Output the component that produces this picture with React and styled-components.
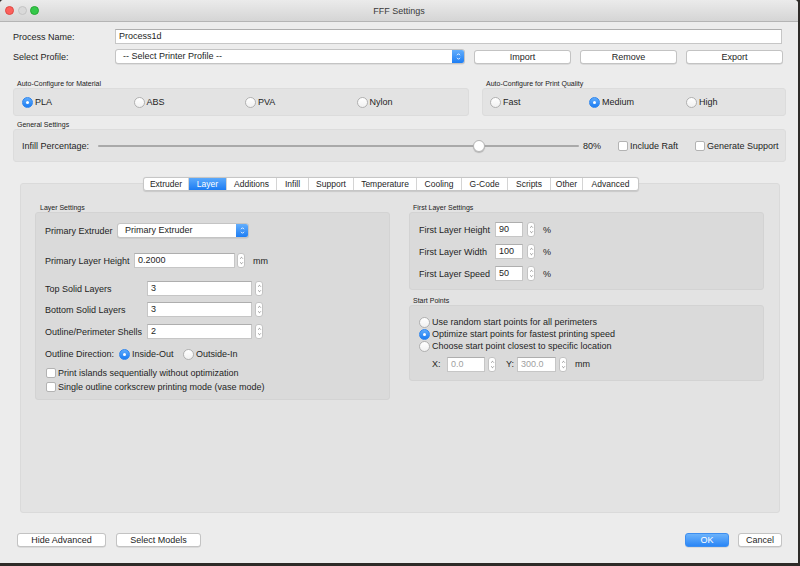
import React from 'react'
import styled, { createGlobalStyle } from 'styled-components'

const Global = createGlobalStyle`
  html, body {
    margin: 0;
    padding: 0;
    background: #2e2b28;
  }
  body {
    font-family: 'Liberation Sans', Arial, sans-serif;
    font-size: 9px;
    color: #1e1e1e;
  }
`

// Window frame
const Window = styled.div`
  width: 798px;
  height: 563px;
  background: #ececec;
  border-radius: 4px 4px 0 0;
  overflow: hidden;
  display: flex;
  flex-direction: column;
`

const TitleBar = styled.div`
  height: 21px;
  flex: none;
  display: flex;
  align-items: center;
  position: relative;
  background: linear-gradient(#ebebeb, #d5d5d5);
  border-bottom: 1px solid #b4b4b4;
`

const Lights = styled.div`
  display: flex;
  gap: 3.5px;
  padding-left: 5px;
`

const Light = styled.span`
  width: 9px;
  height: 9px;
  border-radius: 50%;
  background: ${p => p.$c};
  border: 0.5px solid ${p => p.$b};
  box-sizing: border-box;
`

const Title = styled.div`
  position: absolute;
  left: 0;
  right: 0;
  text-align: center;
  font-size: 9px;
  color: #3a3a3a;
`

const Body = styled.div`
  flex: 1;
  display: flex;
  flex-direction: column;
  padding: 7px 12px 0 13px;
`

// Top form rows
const FormRow = styled.div`
  display: flex;
  align-items: center;
  height: 15px;
  margin-top: ${p => p.$mt || 0}px;
  padding-right: 4px;
`

const FieldLabel = styled.span`
  width: ${p => p.$w || 102}px;
  flex: none;
  white-space: nowrap;
  margin-left: ${p => p.$ml || 0}px;
`

const TextInput = styled.div`
  box-sizing: border-box;
  height: 15px;
  width: ${p => (p.$w ? `${p.$w}px` : 'auto')};
  flex: ${p => (p.$w ? 'none' : 1)};
  background: #fff;
  border: 1px solid #c6c6c6;
  border-top-color: #aeaeae;
  padding: 0 3px;
  line-height: 13px;
  color: ${p => (p.$disabled ? '#a0a0a0' : '#1e1e1e')};
`

const SelectBox = styled.div`
  box-sizing: border-box;
  width: ${p => p.$w}px;
  height: 15px;
  flex: none;
  display: flex;
  align-items: stretch;
  background: #fff;
  border: 1px solid #c4c4c4;
  border-radius: 3px;
  box-shadow: 0 0.5px 0.5px rgba(0, 0, 0, 0.12);
  overflow: hidden;
`

const SelectText = styled.span`
  flex: 1;
  padding-left: 7px;
  line-height: 13px;
`

const SelectArrow = styled.span`
  width: 12px;
  display: flex;
  align-items: center;
  justify-content: center;
  background: linear-gradient(#63aefc, #1e7ef4);
`

const Button = styled.div`
  box-sizing: border-box;
  width: ${p => p.$w}px;
  height: 14px;
  flex: none;
  display: flex;
  align-items: center;
  justify-content: center;
  border-radius: 3px;
  border: 1px solid ${p => (p.$primary ? '#3d8ef0' : '#c3c3c3')};
  background: ${p => (p.$primary ? 'linear-gradient(#6cb3fb, #2a86f6)' : '#fff')};
  color: ${p => (p.$primary ? '#fff' : '#1e1e1e')};
  box-shadow: 0 0.5px 0.5px rgba(0, 0, 0, 0.15);
  margin-left: ${p => p.$ml || 0}px;
`

// Group boxes
const GroupRow = styled.div`
  display: flex;
  gap: 13px;
  margin-top: ${p => p.$mt || 0}px;
`

const GroupWrap = styled.div`
  width: ${p => (p.$w ? `${p.$w}px` : 'auto')};
  flex: ${p => (p.$grow ? 1 : 'none')};
  margin-top: ${p => p.$mt || 0}px;
`

const GroupLabel = styled.div`
  font-size: 7px;
  height: 8px;
  line-height: 8px;
  padding-left: ${p => p.$pl || 4}px;
  color: #222;
  white-space: nowrap;
`

const GroupBox = styled.div`
  box-sizing: border-box;
  height: ${p => p.$h}px;
  background: ${p => p.$bg || '#e3e3e3'};
  border: 1px solid ${p => p.$bd || '#dcdcdc'};
  border-radius: 3px;
  padding: ${p => p.$pad || '0'};
  display: flex;
  flex-direction: ${p => (p.$col ? 'column' : 'row')};
  align-items: ${p => (p.$col ? 'stretch' : 'center')};
`

const RadioItem = styled.label`
  display: flex;
  align-items: center;
  width: ${p => (p.$w ? `${p.$w}px` : 'auto')};
  flex: none;
  gap: 2px;
  height: ${p => p.$h || 12}px;
  white-space: nowrap;
`

const RadioDot = styled.span`
  box-sizing: border-box;
  width: 11px;
  height: 11px;
  border-radius: 50%;
  flex: none;
  display: flex;
  align-items: center;
  justify-content: center;
  background: ${p => (p.$on ? 'linear-gradient(#5fabfb, #1b7cf3)' : 'linear-gradient(#fff, #f1f1f1)')};
  border: 1px solid ${p => (p.$on ? '#2f86ee' : '#b1b1b1')};
  &::after {
    content: '';
    display: ${p => (p.$on ? 'block' : 'none')};
    width: 3px;
    height: 3px;
    border-radius: 50%;
    background: #fff;
  }
`

const CheckBox = styled.span`
  box-sizing: border-box;
  width: 10px;
  height: 10px;
  flex: none;
  background: #fff;
  border: 1px solid #b3b3b3;
  border-radius: 2px;
`

const CheckItem = styled.label`
  display: flex;
  align-items: center;
  gap: 2px;
  height: ${p => p.$h || 12}px;
  margin-left: ${p => p.$ml || 0}px;
  margin-top: ${p => p.$mt || 0}px;
  white-space: nowrap;
`

// Slider
const Track = styled.div`
  position: relative;
  width: 481px;
  height: 2px;
  background: #a9a9a9;
  border-radius: 1px;
`

const Thumb = styled.span`
  position: absolute;
  top: -5px;
  width: 12px;
  height: 12px;
  margin-left: -6px;
  border-radius: 50%;
  background: #fff;
  border: 0.5px solid #b5b5b5;
  box-shadow: 0 1px 1px rgba(0, 0, 0, 0.2);
  box-sizing: border-box;
`

const Percent = styled.span`
  margin-left: 4px;
  width: 35px;
  flex: none;
`

// Tabs panel
const TabPane = styled.div`
  margin: 21px 6px 0 7px;
  height: 330px;
  flex: none;
  box-sizing: border-box;
  background: #e3e3e3;
  border: 1px solid #dadada;
  border-radius: 3px;
  display: flex;
  flex-direction: column;
`

const TabBar = styled.div`
  display: flex;
  align-self: flex-start;
  margin: -7px 0 0 122px;
  height: 14px;
  box-sizing: border-box;
  background: #fff;
  border: 1px solid #c6c6c6;
  border-radius: 3px;
  box-shadow: 0 0.5px 1px rgba(0, 0, 0, 0.12);
  overflow: hidden;
`

const Tab = styled.div`
  width: ${p => p.$w}px;
  display: flex;
  align-items: center;
  justify-content: center;
  font-size: 8.5px;
  border-left: ${p => (p.$first ? 'none' : '1px solid #d4d4d4')};
  background: ${p => (p.$active ? 'linear-gradient(#5ba9fb, #1d7cf3)' : 'transparent')};
  color: ${p => (p.$active ? '#fff' : '#1e1e1e')};
  box-sizing: border-box;
`

const Columns = styled.div`
  display: grid;
  grid-template-columns: 355px 355px;
  gap: 19px;
  padding: 13px 15px 0 14px;
`

const Column = styled.div`
  display: flex;
  flex-direction: column;
`

const InnerRow = styled.div`
  display: flex;
  align-items: center;
  height: ${p => p.$h || 15}px;
  margin-top: ${p => p.$mt || 0}px;
  padding-left: ${p => p.$pl || 0}px;
`

const Stepper = styled.span`
  box-sizing: border-box;
  width: 8px;
  height: 15px;
  flex: none;
  margin-left: ${p => p.$ml || 2}px;
  background: #fff;
  border: 1px solid #c3c3c3;
  border-radius: 3px;
  display: flex;
  align-items: center;
  justify-content: center;
`

const Unit = styled.span`
  margin-left: ${p => p.$ml || 8}px;
`

const Footer = styled.div`
  display: flex;
  align-items: center;
  margin-top: 20px;
  padding: 0 4px;
`

const Spacer = styled.div`
  flex: 1;
`

const Updown = ({ color = '#fff' }) => (
  <svg width="5" height="9" viewBox="0 0 5 9">
    <path d="M1 3.2 L2.5 1.7 L4 3.2 M1 5.8 L2.5 7.3 L4 5.8" fill="none" stroke={color} strokeWidth="0.9" />
  </svg>
)

const Spin = ({ ml }) => (
  <Stepper $ml={ml}>
    <svg width="5" height="11" viewBox="0 0 5 11">
      <path d="M1.2 3.6 L2.5 2.3 L3.8 3.6 M1.2 7.4 L2.5 8.7 L3.8 7.4" fill="none" stroke="#777" strokeWidth="0.8" />
    </svg>
  </Stepper>
)

const Radio = ({ on, label, ...rest }) => (
  <RadioItem {...rest}>
    <RadioDot $on={on} />
    {label}
  </RadioItem>
)

const tabs = [
  ['Extruder', 44], ['Layer', 38], ['Additions', 50], ['Infill', 32], ['Support', 45],
  ['Temperature', 63], ['Cooling', 45], ['G-Code', 46], ['Scripts', 43], ['Other', 32], ['Advanced', 56],
]

const firstLayer = [
  ['First Layer Height', '90'],
  ['First Layer Width', '100'],
  ['First Layer Speed', '50'],
]

export default function App() {
  return (
    <>
      <Global />
      <Window>
        <TitleBar>
          <Lights>
            <Light $c="#fc605c" $b="#de4a45" />
            <Light $c="#d9d9d9" $b="#c4c4c4" />
            <Light $c="#34c84a" $b="#27aa35" />
          </Lights>
          <Title>FFF Settings</Title>
        </TitleBar>
        <Body>
          <FormRow>
            <FieldLabel>Process Name:</FieldLabel>
            <TextInput>Process1d</TextInput>
          </FormRow>
          <FormRow $mt={5}>
            <FieldLabel>Select Profile:</FieldLabel>
            <SelectBox $w={350}>
              <SelectText>-- Select Printer Profile --</SelectText>
              <SelectArrow><Updown /></SelectArrow>
            </SelectBox>
            <Button $w={97} $ml={9}>Import</Button>
            <Button $w={97} $ml={9}>Remove</Button>
            <Button $w={97} $ml={9}>Export</Button>
          </FormRow>

          <GroupRow $mt={16}>
            <GroupWrap $w={456}>
              <GroupLabel>Auto-Configure for Material</GroupLabel>
              <GroupBox $h={28} $pad="0 0 0 8px">
                <Radio on label="PLA" $w={111.5} />
                <Radio label="ABS" $w={111.5} />
                <Radio label="PVA" $w={111.5} />
                <Radio label="Nylon" $w={100} />
              </GroupBox>
            </GroupWrap>
            <GroupWrap $grow>
              <GroupLabel>Auto-Configure for Print Quality</GroupLabel>
              <GroupBox $h={28} $pad="0 0 0 7px">
                <Radio label="Fast" $w={99} />
                <Radio on label="Medium" $w={97} />
                <Radio label="High" $w={90} />
              </GroupBox>
            </GroupWrap>
          </GroupRow>

          <GroupWrap $mt={5}>
            <GroupLabel>General Settings</GroupLabel>
            <GroupBox $h={33} $pad="0 0 0 8px">
              <FieldLabel $w={76}>Infill Percentage:</FieldLabel>
              <Track>
                <Thumb style={{ left: `${0.792 * 100}%` }} />
              </Track>
              <Percent>80%</Percent>
              <CheckItem><CheckBox />Include Raft</CheckItem>
              <CheckItem $ml={17}><CheckBox />Generate Support</CheckItem>
            </GroupBox>
          </GroupWrap>

          <TabPane>
            <TabBar>
              {tabs.map(([name, w], i) => (
                <Tab key={name} $w={w} $first={i === 0} $active={name === 'Layer'}>{name}</Tab>
              ))}
            </TabBar>
            <Columns>
              <Column>
                <GroupLabel $pl={5}>Layer Settings</GroupLabel>
                <GroupBox $h={188} $col $bg="#dadada" $bd="#d3d3d3" $pad="10px 0 0 9px">
                  <InnerRow>
                    <FieldLabel $w={72}>Primary Extruder</FieldLabel>
                    <SelectBox $w={132}>
                      <SelectText>Primary Extruder</SelectText>
                      <SelectArrow><Updown /></SelectArrow>
                    </SelectBox>
                  </InnerRow>
                  <InnerRow $mt={15}>
                    <FieldLabel $w={89}>Primary Layer Height</FieldLabel>
                    <TextInput $w={101}>0.2000</TextInput>
                    <Spin />
                    <Unit>mm</Unit>
                  </InnerRow>
                  <InnerRow $mt={13}>
                    <FieldLabel>Top Solid Layers</FieldLabel>
                    <TextInput $w={105}>3</TextInput>
                    <Spin ml={3} />
                  </InnerRow>
                  <InnerRow $mt={6}>
                    <FieldLabel>Bottom Solid Layers</FieldLabel>
                    <TextInput $w={105}>3</TextInput>
                    <Spin ml={3} />
                  </InnerRow>
                  <InnerRow $mt={7}>
                    <FieldLabel>Outline/Perimeter Shells</FieldLabel>
                    <TextInput $w={105}>2</TextInput>
                    <Spin ml={3} />
                  </InnerRow>
                  <InnerRow $mt={8} $h={14}>
                    <FieldLabel $w={74}>Outline Direction:</FieldLabel>
                    <Radio on label="Inside-Out" $w={64} />
                    <Radio label="Outside-In" />
                  </InnerRow>
                  <CheckItem $mt={6} $ml={1}><CheckBox />Print islands sequentially without optimization</CheckItem>
                  <CheckItem $mt={2} $ml={1}><CheckBox />Single outline corkscrew printing mode (vase mode)</CheckItem>
                </GroupBox>
              </Column>
              <Column>
                <GroupLabel>First Layer Settings</GroupLabel>
                <GroupBox $h={78} $col $bg="#dadada" $bd="#d3d3d3" $pad="9px 0 0 9px">
                  {firstLayer.map(([l, v], i) => (
                    <InnerRow key={l} $mt={i ? 7 : 0}>
                      <FieldLabel $w={76}>{l}</FieldLabel>
                      <TextInput $w={28}>{v}</TextInput>
                      <Spin ml={4} />
                      <Unit>%</Unit>
                    </InnerRow>
                  ))}
                </GroupBox>
                <GroupWrap $mt={7}>
                  <GroupLabel>Start Points</GroupLabel>
                  <GroupBox $h={76} $col $bg="#dadada" $bd="#d3d3d3" $pad="10px 0 0 9px">
                    <Radio label="Use random start points for all perimeters" />
                    <Radio on label="Optimize start points for fastest printing speed" />
                    <Radio label="Choose start point closest to specific location" />
                    <InnerRow $mt={5} $h={14} $pl={13}>
                      <FieldLabel $w={15}>X:</FieldLabel>
                      <TextInput $w={38} $disabled>0.0</TextInput>
                      <Spin ml={3} />
                      <FieldLabel $w={11} $ml={10}>Y:</FieldLabel>
                      <TextInput $w={39} $disabled>300.0</TextInput>
                      <Spin ml={3} />
                      <Unit>mm</Unit>
                    </InnerRow>
                  </GroupBox>
                </GroupWrap>
              </Column>
            </Columns>
          </TabPane>

          <Footer>
            <Button $w={89}>Hide Advanced</Button>
            <Button $w={85} $ml={10}>Select Models</Button>
            <Spacer />
            <Button $w={44} $primary>OK</Button>
            <Button $w={44} $ml={9}>Cancel</Button>
          </Footer>
        </Body>
      </Window>
    </>
  )
}
